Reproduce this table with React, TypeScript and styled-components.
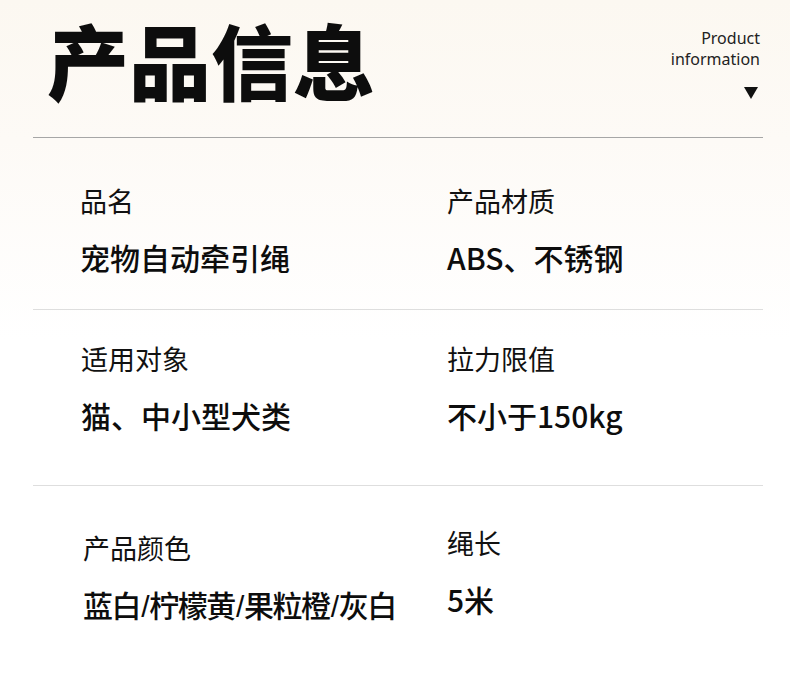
import styled, { createGlobalStyle } from 'styled-components';

const GlobalStyle = createGlobalStyle`
    html, body {
        margin: 0;
        padding: 0;
        background: #ffffff;
    }
    body {
        font-family: "Noto Sans CJK SC", "Noto Sans", sans-serif;
        color: #111111;
    }
`;

const Page = styled.div`
    width: 790px;
    height: 681px;
    box-sizing: border-box;
    padding: 0 27px 0 33px;
    background: linear-gradient(180deg, #fcf8f1 0px, #fdfaf6 140px, #ffffff 340px);
    overflow: hidden;
`;

const Header = styled.header`
    display: flex;
    justify-content: space-between;
    align-items: flex-start;
    height: 138px;
    border-bottom: 1px solid #a6a6a6;
    box-sizing: border-box;
`;

const Title = styled.h1`
    margin: 0;
    padding: 14px 0 0 14px;
    font-family: "Noto Sans CJK SC", sans-serif;
    font-size: 82px;
    font-weight: 900;
    line-height: 1.1;
    color: #0d0d0d;
`;

const Aside = styled.div`
    display: flex;
    flex-direction: column;
    align-items: flex-end;
    padding: 28px 3px 0 0;
    font-family: "Noto Sans", sans-serif;
    font-size: 16px;
    line-height: 21px;
    color: #222222;
    text-align: right;
`;

const Arrow = styled.span`
    display: block;
    margin: 17px 2px 0 0;
    width: 0;
    height: 0;
    border-left: 7px solid transparent;
    border-right: 7px solid transparent;
    border-top: 12px solid #111111;
`;

const Row = styled.section<{ height?: number }>`
    display: grid;
    grid-template-columns: 367px 1fr;
    padding: 0 0 0 47px;
    height: ${props => (props.height ? `${props.height}px` : 'auto')};
    border-bottom: ${props => (props.height ? '1px solid #dedede' : 'none')};
    box-sizing: border-box;
`;

const Cell = styled.div<{ top: number; indent?: number }>`
    display: flex;
    flex-direction: column;
    gap: 22px;
    padding-top: ${props => props.top}px;
    padding-left: ${props => props.indent || 0}px;
`;

const Label = styled.div`
    font-size: 27px;
    font-weight: 400;
    line-height: 32px;
    color: #111111;
`;

const Value = styled.div<{ tight?: boolean }>`
    font-size: 30px;
    font-weight: 500;
    line-height: 36px;
    letter-spacing: ${props => (props.tight ? '-1.4px' : '0')};
    color: #0d0d0d;
`;

// narrower slash than the CJK font's own
const Slash = styled.span`
    font-family: "Liberation Sans", sans-serif;
    font-weight: 400;
    padding: 0 1px;
`;

type Item = { label: string; value: string; top: number; indent?: number };

const rows: { height?: number; items: Item[] }[] = [
    {
        height: 172,
        items: [
            { label: '品名', value: '宠物自动牵引绳', top: 47 },
            { label: '产品材质', value: 'ABS、不锈钢', top: 47 },
        ],
    },
    {
        height: 176,
        items: [
            { label: '适用对象', value: '猫、中小型犬类', top: 33, indent: 1 },
            { label: '拉力限值', value: '不小于150kg', top: 33 },
        ],
    },
    {
        items: [
            { label: '产品颜色', value: '蓝白/柠檬黄/果粒橙/灰白', top: 46, indent: 3 },
            { label: '绳长', value: '5米', top: 41 },
        ],
    },
];

const renderValue = (value: string) =>
    value.split('/').map((part, index) => (
        <span key={index}>
            {index > 0 && <Slash>/</Slash>}
            {part}
        </span>
    ));

const App = () => {
    return (
        <Page>
            <GlobalStyle />
            <Header>
                <Title>产品信息</Title>
                <Aside>
                    <span>Product</span>
                    <span>information</span>
                    <Arrow />
                </Aside>
            </Header>
            {rows.map((row, index) => (
                <Row key={index} height={row.height}>
                    {row.items.map(item => (
                        <Cell key={item.label} top={item.top} indent={item.indent}>
                            <Label>{item.label}</Label>
                            <Value tight={item.value.includes('/')}>{renderValue(item.value)}</Value>
                        </Cell>
                    ))}
                </Row>
            ))}
        </Page>
    );
};

export default App;
